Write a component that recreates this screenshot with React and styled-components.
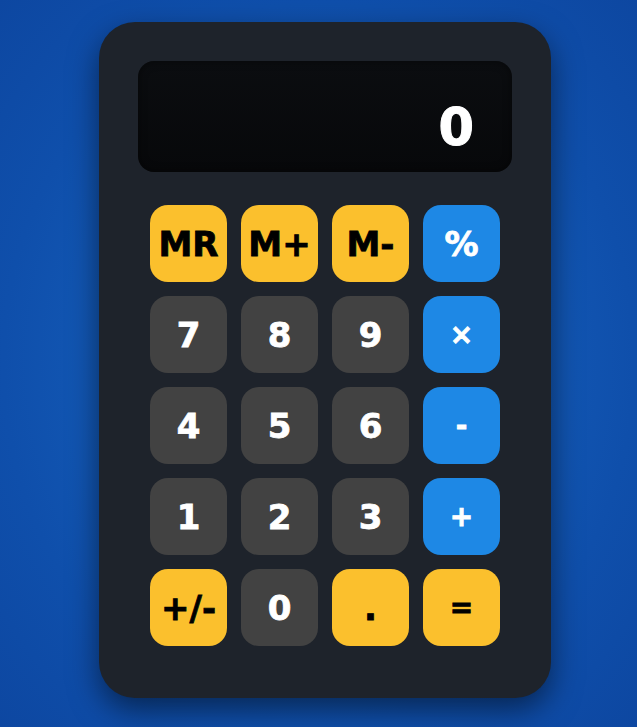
import React from "react";
import styled, { createGlobalStyle } from "styled-components";

const Global = createGlobalStyle`
  html, body { margin: 0; padding: 0; }
  body {
    min-height: 100vh;
    background: radial-gradient(ellipse at 50% 50%, #1968c6 0%, #145cb9 35%, #0f4fab 70%, #0d47a1 100%);
    font-family: "DejaVu Sans", "Liberation Sans", sans-serif;
  }
`;

const Page = styled.div`
  min-height: 727px;
  box-sizing: border-box;
  padding: 22px 0 0 99px;
  display: flex;
  align-items: flex-start;
`;

const Calculator = styled.div`
  width: 452px;
  box-sizing: border-box;
  padding: 39px 39px 52px;
  background: #1e232b;
  border-radius: 36px;
  box-shadow: 0 12px 30px rgba(0, 0, 0, 0.5);
  display: flex;
  flex-direction: column;
  gap: 33px;
`;

const Display = styled.div`
  height: 111px;
  box-sizing: border-box;
  border-radius: 16px;
  background: linear-gradient(180deg, #0b0d10 0%, #07080a 100%);
  box-shadow: inset 0 0 8px rgba(0, 0, 0, 0.5);
  display: flex;
  align-items: center;
  justify-content: flex-end;
  padding: 22px 38px 0;
  color: #ffffff;
  font-size: 51px;
  font-weight: 700;
  line-height: 1;
  -webkit-text-stroke: 1px #ffffff;
`;

const Keys = styled.div`
  display: grid;
  grid-template-columns: repeat(4, 77px);
  grid-auto-rows: 77px;
  column-gap: 14px;
  row-gap: 14px;
  padding: 0 12px;
`;

const palette = {
  yellow: { bg: "#fbc02d", fg: "#000000" },
  blue: { bg: "#1e88e5", fg: "#ffffff" },
  gray: { bg: "#424242", fg: "#ffffff" },
};

const Key = styled.button`
  border: none;
  margin: 0;
  padding: 0;
  border-radius: 18px;
  background: ${(p) => palette[p.$tone].bg};
  color: ${(p) => palette[p.$tone].fg};
  -webkit-text-stroke: 0.8px ${(p) => palette[p.$tone].fg};
  font-family: "DejaVu Sans", "Liberation Sans", sans-serif;
  font-weight: 700;
  font-size: ${(p) => (p.$small ? "28px" : "34px")};
  line-height: 1;
  display: flex;
  align-items: center;
  justify-content: center;
  cursor: pointer;
`;

const keys = [
  ["MR", "yellow"], ["M+", "yellow"], ["M-", "yellow"], ["%", "blue"],
  ["7", "gray"], ["8", "gray"], ["9", "gray"], ["×", "blue", true],
  ["4", "gray"], ["5", "gray"], ["6", "gray"], ["-", "blue", true],
  ["1", "gray"], ["2", "gray"], ["3", "gray"], ["+", "blue", true],
  ["+/-", "yellow"], ["0", "gray"], [".", "yellow"], ["=", "yellow", true],
];

export default function App() {
  return (
    <>
      <Global />
      <Page>
        <Calculator>
          <Display>0</Display>
          <Keys>
            {keys.map(([label, tone, small]) => (
              <Key key={label} $tone={tone} $small={small}>
                {label}
              </Key>
            ))}
          </Keys>
        </Calculator>
      </Page>
    </>
  );
}
